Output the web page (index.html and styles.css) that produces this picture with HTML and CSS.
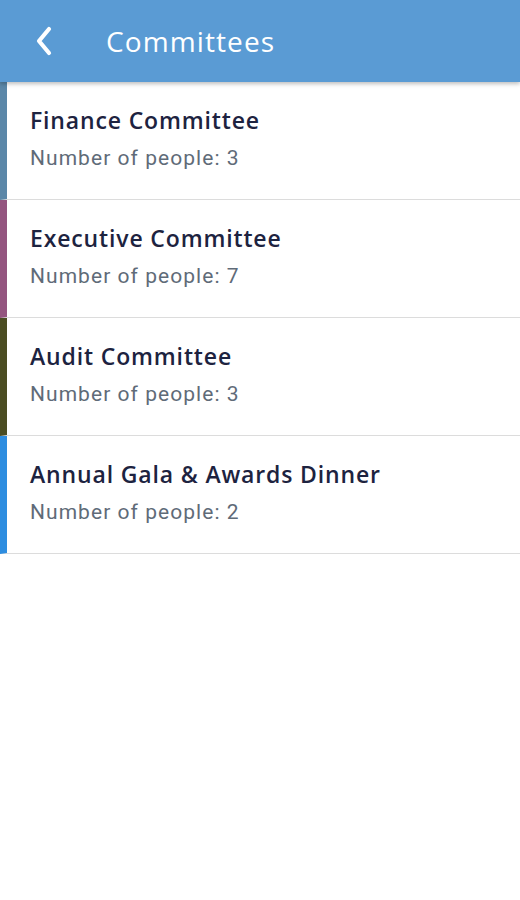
FILE: index.html
```html
<!DOCTYPE html>
<html>
	<head>
		<meta charset="utf-8">
		<title>Committees</title>
		<link rel="stylesheet" href="styles.css">
	</head>
	<body>
		<div class="header">
			<span class="back">
				<svg width="20" height="30" viewBox="0 0 20 30"><path d="M15 3 L5 15 L15 27" fill="none" stroke="#fff" stroke-width="4.2" stroke-linecap="round" stroke-linejoin="round"/></svg>
			</span>
			<h1 class="title">Committees</h1>
		</div>
		<ul class="list">
			<li class="item finance">
				<div class="name">Finance Committee</div>
				<div class="count">Number of people: 3</div>
			</li>
			<li class="item executive">
				<div class="name">Executive Committee</div>
				<div class="count">Number of people: 7</div>
			</li>
			<li class="item audit">
				<div class="name">Audit Committee</div>
				<div class="count">Number of people: 3</div>
			</li>
			<li class="item gala">
				<div class="name">Annual Gala &amp; Awards Dinner</div>
				<div class="count">Number of people: 2</div>
			</li>
		</ul>
	</body>
</html>
```

FILE: styles.css
```css
*{
	margin:0;
	padding:0;
	box-sizing:border-box;
}
body{
	background:#fff;
	font-family:"Open Sans", "Liberation Sans", sans-serif;
}
.header{
	height:82px;
	background:#5a9bd4;
	display:flex;
	align-items:center;
	padding-left:34px;
	box-shadow:0 2px 4px rgba(0,0,0,0.25);
	position:relative;
	z-index:1;
}
.back{
	display:flex;
	width:20px;
	height:30px;
}
.title{
	margin-left:52px;
	color:#fff;
	font-size:28px;
	font-weight:500;
	letter-spacing:1.1px;
}
.list{
	list-style:none;
}
.item{
	height:118px;
	border-left:7px solid #5b87a8;
	border-bottom:1px solid #dcdcdc;
	padding:24px 0 0 23px;
}
.executive{ border-left-color:#94557f; }
.audit{ border-left-color:#4b4d22; }
.gala{ border-left-color:#2e8de0; }
.name{
	color:#1d2340;
	font-size:23px;
	font-weight:600;
	letter-spacing:0.85px;
	line-height:28px;
}
.count{
	margin-top:12px;
	color:#5f6b78;
	font-family:Roboto, "Liberation Sans", sans-serif;
	font-size:21px;
	letter-spacing:1.05px;
	line-height:24px;
}
```
